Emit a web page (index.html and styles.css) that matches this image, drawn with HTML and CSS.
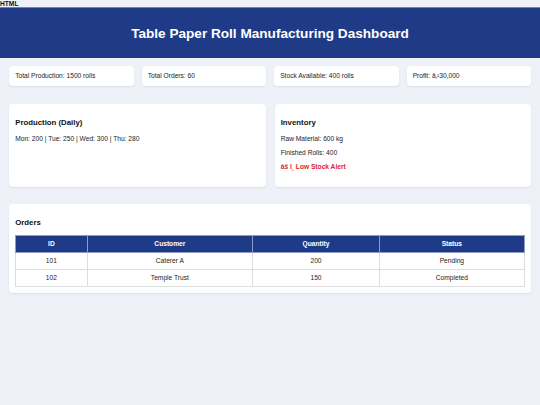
FILE: index.html
```html
<!DOCTYPE html>
<html lang="en">
<head>
<meta charset="utf-8">
<title>Table Paper Roll Manufacturing Dashboard</title>
<link rel="stylesheet" href="styles.css">
</head>
<body>
<div class="stray">HTML</div>
<header class="top">
  <h1>Table Paper Roll Manufacturing Dashboard</h1>
</header>
<main class="wrap">
  <section class="stats">
    <div class="card">Total Production: 1500 rolls</div>
    <div class="card">Total Orders: 60</div>
    <div class="card">Stock Available: 400 rolls</div>
    <div class="card">Profit: â‚¹30,000</div>
  </section>
  <section class="panels">
    <div class="panel">
      <h3>Production (Daily)</h3>
      <p>Mon: 200 | Tue: 250 | Wed: 300 | Thu: 280</p>
    </div>
    <div class="panel">
      <h3>Inventory</h3>
      <p>Raw Material: 600 kg</p>
      <p>Finished Rolls: 400</p>
      <p class="alert">âš&nbsp;ï¸ Low Stock Alert</p>
    </div>
  </section>
  <section class="panel orders">
    <h3>Orders</h3>
    <table class="tbl">
      <thead>
        <tr><th class="c-id">ID</th><th class="c-cust">Customer</th><th class="c-qty">Quantity</th><th class="c-st">Status</th></tr>
      </thead>
      <tbody>
        <tr><td>101</td><td>Caterer A</td><td>200</td><td>Pending</td></tr>
        <tr><td>102</td><td>Temple Trust</td><td>150</td><td>Completed</td></tr>
      </tbody>
    </table>
  </section>
</main>
</body>
</html>
```
FILE: styles.css
```css
* { box-sizing: border-box; }
html, body { margin: 0; padding: 0; }
body {
  font-family: "Liberation Sans", Arial, sans-serif;
  font-size: 6.65px;
  color: #222;
  background: #eef1f8;
  min-height: 405px;
}
.stray {
  font-weight: bold;
  line-height: 7px;
  height: 7px;
  color: #111;
}
.top {
  background: #1f3b88;
  color: #fff;
  height: 51px;
  display: flex;
  align-items: center;
  justify-content: center;
  border-top: 1px solid #6f82b8;
}
.top h1 {
  margin: 0;
  font-size: 13.6px;
  font-weight: bold;
}
.wrap {
  padding: 8px 9px;
}
.stats {
  display: grid;
  grid-template-columns: repeat(4, 1fr);
  gap: 8px;
  margin-bottom: 18px;
}
.card {
  background: #fff;
  border-radius: 4px;
  padding: 6.2px;
  line-height: 7.6px;
  box-shadow: 0 1px 2px rgba(0,0,0,0.08);
}
.panels {
  display: grid;
  grid-template-columns: 1fr 1fr;
  gap: 9px;
  margin-bottom: 17px;
}
.panel {
  background: #fff;
  border-radius: 4px;
  padding: 6.2px;
  box-shadow: 0 1px 2px rgba(0,0,0,0.08);
}
.panels .panel { padding-bottom: 9.5px; }
.panel h3 {
  font-size: 7.8px;
  line-height: 9px;
  margin: 7.8px 0;
  color: #111;
}
.panel p {
  margin: 6.65px 0;
  line-height: 7.6px;
}
.panel .alert {
  color: #e02424;
  font-weight: bold;
}
.tbl {
  width: 100%;
  border-collapse: collapse;
  text-align: center;
}
.tbl th {
  background: #1f3b88;
  color: #fff;
  font-weight: bold;
  border: 0.5px solid #8d9cc6;
  padding: 4.2px;
  line-height: 7.6px;
}
.tbl td {
  border: 0.5px solid #ddd;
  padding: 4.2px;
  line-height: 7.6px;
}
```
